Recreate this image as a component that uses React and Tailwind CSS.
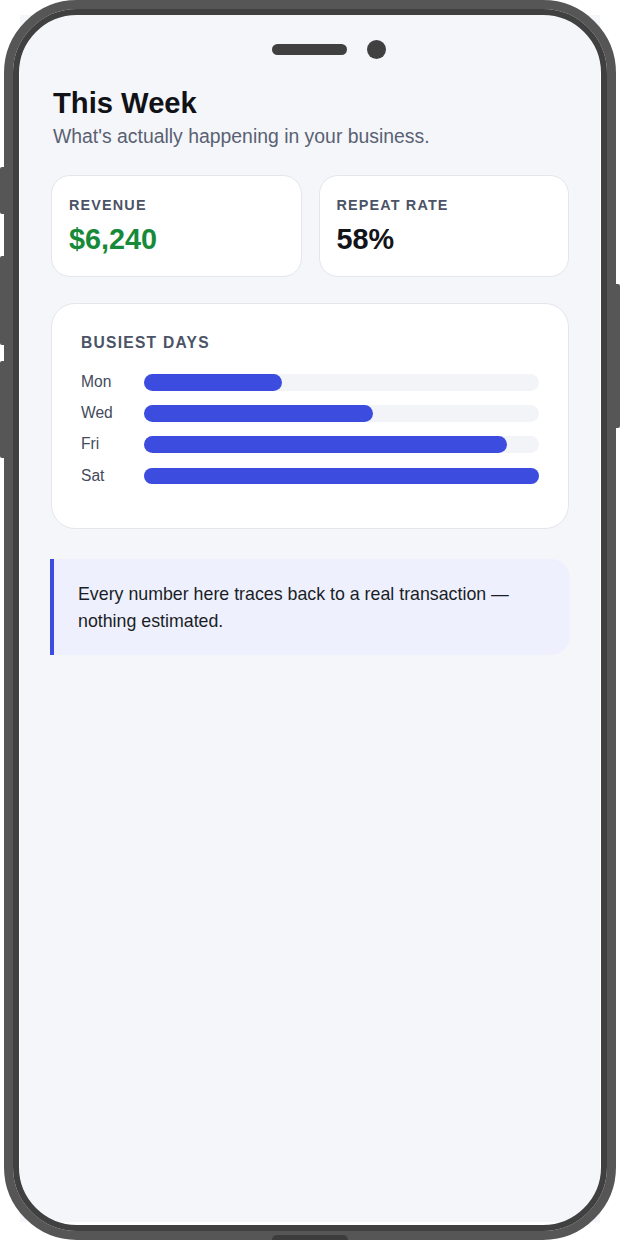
const days = [
  { day: "Mon", value: 35 },
  { day: "Wed", value: 58 },
  { day: "Fri", value: 92 },
  { day: "Sat", value: 100 },
];

function StatCard({ label, value, valueClass }) {
  return (
    <div className="rounded-[19px] border border-[#e4e6ee] bg-white pl-[17px] pt-[21.6px] pb-[19px]">
      <div className="text-[14.4px] leading-[17.28px] font-bold tracking-[0.08em] text-[#4b5366]">
        {label}
      </div>
      <div className={`mt-[7.5px] text-[28.8px] leading-[34.56px] font-bold ${valueClass}`}>
        {value}
      </div>
    </div>
  );
}

function BusiestDays() {
  return (
    <div className="mt-[26px] rounded-[24px] border border-[#e4e6ee] bg-white px-[29px] pt-[30px] pb-[44px]">
      <div className="text-[15.6px] leading-[18.72px] font-bold tracking-[0.08em] text-[#4b5366]">
        BUSIEST DAYS
      </div>
      <div className="mt-[21.5px] flex flex-col gap-[14.4px]">
        {days.map((d) => (
          <div key={d.day} className="flex h-[16.8px] items-center">
            <div className="w-[63px] shrink-0 text-[15.6px] leading-[16.8px] text-[#444b5c]">
              {d.day}
            </div>
            <div className="h-[16.8px] flex-1 rounded-full bg-[#f3f4f8]">
              <div
                className="h-full rounded-full bg-[#3b4cdf]"
                style={{ width: `${d.value}%` }}
              />
            </div>
          </div>
        ))}
      </div>
    </div>
  );
}

export default function App() {
  return (
    <div className="relative h-[1240px] w-[620px] overflow-hidden bg-white font-['Liberation_Sans',Arial,sans-serif]">
      {/* screen */}
      <div className="ml-[20px] mt-[15px] h-[1207px] w-[580px] bg-[#f5f6fa] px-[31px] pt-[71px]">
        <div className="pl-[2px]">
          <h1 className="text-[29.2px] leading-[34.56px] font-bold text-[#111217]">
            This Week
          </h1>
          <p className="mt-[1.5px] text-[19.4px] leading-[28.8px] text-[#596173]">
            What's actually happening in your business.
          </p>
        </div>

        <div className="mt-[24px] grid grid-cols-2 gap-[17px]">
          <StatCard label="REVENUE" value="$6,240" valueClass="text-[#178a3a]" />
          <StatCard label="REPEAT RATE" value="58%" valueClass="text-[#121419]" />
        </div>

        <BusiestDays />

        <div className="-mx-[1px] mt-[30px] rounded-r-[19px] border-l-4 border-[#3b4cdf] bg-[#eef1fd] px-[24px] pt-[22px] pb-[20px] text-[17.8px] leading-[27px] text-[#1b1e27]">
          Every number here traces back to a real transaction — nothing estimated.
        </div>
      </div>

      {/* side buttons */}
      <div className="absolute left-0 top-[167px] h-[47px] w-[6px] rounded-l-[2px] bg-[#565656]" />
      <div className="absolute left-0 top-[256px] h-[89px] w-[6px] rounded-l-[2px] bg-[#565656]" />
      <div className="absolute left-0 top-[361px] h-[97px] w-[6px] rounded-l-[2px] bg-[#565656]" />
      <div className="absolute right-0 top-[284px] h-[144px] w-[6px] rounded-r-[2px] bg-[#565656]" />

      {/* bezel */}
      <div className="pointer-events-none absolute left-[4px] top-0 h-[1240px] w-[612px] rounded-[73px] border-[9px] border-[#565656]">
        <div className="h-full w-full rounded-[64px] border-[6px] border-[#404040]" />
      </div>

      {/* speaker and camera */}
      <div className="absolute left-[272px] top-[44px] h-[11px] w-[75px] rounded-full bg-[#404040]" />
      <div className="absolute left-[366.5px] top-[39.5px] h-[19px] w-[19px] rounded-full bg-[#404040]" />

      {/* bottom edge tab */}
      <div className="absolute left-[272px] top-[1235px] h-[5px] w-[76px] rounded-t-[5px] bg-[#3c3c3c]" />
    </div>
  );
}
